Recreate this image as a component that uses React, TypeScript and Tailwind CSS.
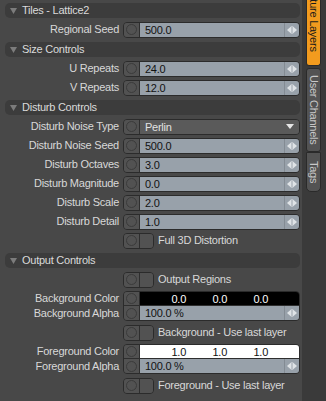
import React from 'react';

const font = "font-['Liberation_Sans',Arial,sans-serif] text-[11px] tracking-[-0.25px]";

const Arrows = () => (
  <svg width="10" height="8" viewBox="0 0 10 8">
    <path d="M0 4 L4 0.5 V7.5 Z" fill="#dfe3e6" />
    <rect x="4.5" y="0" width="1" height="8" fill="#dfe3e6" />
    <path d="M10 4 L6 0.5 V7.5 Z" fill="#dfe3e6" />
  </svg>
);

const Cap = ({ extra = '' }: { extra?: string }) => (
  <div className={`w-[16px] shrink-0 h-full flex items-center justify-center bg-[#525252] border-r border-[#2e2e2e] ${extra}`}>
    <div className="w-[11px] h-[11px] rounded-full border border-[#3b3b3b]" />
  </div>
);

const Label = ({ text }: { text: string }) => (
  <div className="w-[119px] shrink-0 text-right text-[#d8d8d8] whitespace-nowrap leading-[15px]">{text}</div>
);

const Header = ({ title }: { title: string }) => (
  <div className="h-[20px] pt-[3px] pl-[5px]">
    <div className="w-[295px] h-[15px] rounded-[5px] bg-[#3c3c3c] flex items-center">
      <svg className="ml-[5px]" width="7" height="6" viewBox="0 0 7 6">
        <path d="M0 0 H7 L3.5 6 Z" fill="#7c7c7c" />
      </svg>
      <span className="ml-[5px] text-[#dadada] leading-[15px]">{title}</span>
    </div>
  </div>
);

const NumRow = ({ label, value }: { label: string; value: string }) => (
  <div className="flex h-[19px] items-center">
    <Label text={label} />
    <div className="ml-[4px] w-[177px] h-[16px] flex rounded-[4px] border border-[#2b2b2b] overflow-hidden">
      <Cap />
      <div className="flex-1 bg-[#98a1aa] text-[#121212] pl-[5px] leading-[14px]">{value}</div>
      <div className="w-[15px] bg-[#98a1aa] border-l border-[#838b93] flex items-center justify-center">
        <Arrows />
      </div>
    </div>
  </div>
);

const SelectRow = ({ label, value }: { label: string; value: string }) => (
  <div className="flex h-[19px] items-center">
    <Label text={label} />
    <div className="ml-[4px] w-[177px] h-[16px] flex rounded-[4px] border border-[#2b2b2b] overflow-hidden">
      <Cap />
      <div className="flex-1 bg-[#5a5a5a] text-[#e2e2e2] pl-[5px] leading-[14px] flex items-center justify-between">
        <span>{value}</span>
        <svg className="mr-[5px]" width="8" height="5" viewBox="0 0 8 5">
          <path d="M0 0 H8 L4 5 Z" fill="#e6e6e6" />
        </svg>
      </div>
    </div>
  </div>
);

const ToggleRow = ({ label }: { label: string }) => (
  <div className="flex h-[19px] items-center">
    <div className="w-[119px] shrink-0" />
    <div className="ml-[4px] w-[31px] h-[16px] flex rounded-[4px] border border-[#2b2b2b] overflow-hidden">
      <Cap />
      <div className="flex-1 bg-[#525252]" />
    </div>
    <span className="ml-[4px] text-[#d8d8d8] whitespace-nowrap leading-[15px]">{label}</span>
  </div>
);

const ColorPair = ({
  name,
  values,
  dark,
}: {
  name: string;
  values: string[];
  dark: boolean;
}) => (
  <div className="flex pt-[2px] pb-[2px]">
    <div className="flex flex-col">
      <div className="h-[15px] flex items-center"><Label text={`${name} Color`} /></div>
      <div className="h-[15px] flex items-center"><Label text={`${name} Alpha`} /></div>
    </div>
    <div className="ml-[4px] w-[177px] h-[30px] flex flex-col rounded-[4px] border border-[#2b2b2b] overflow-hidden">
      <div className="h-[14px] flex border-b border-[#2e2e2e]">
        <Cap />
        <div className={`flex-1 flex pl-[5px] leading-[14px] ${dark ? 'bg-black text-white' : 'bg-white text-[#111]'}`}>
          {values.map((v, i) => (
            <span key={i} className="w-[41px] text-right">{v}</span>
          ))}
        </div>
      </div>
      <div className="flex-1 flex">
        <Cap />
        <div className="flex-1 bg-[#98a1aa] text-[#121212] pl-[5px] leading-[14px]">100.0 %</div>
        <div className="w-[15px] bg-[#98a1aa] border-l border-[#838b93] flex items-center justify-center">
          <Arrows />
        </div>
      </div>
    </div>
  </div>
);

const Tabs = () => (
  <div className="w-[24px] h-full bg-[#3a3a3a] pl-[4px] flex flex-col">
    <div className="w-[15px] h-[66px] bg-[#f29b1e] border-x border-b border-[#2a2a2a] rounded-b-[3px] overflow-hidden flex justify-center">
      <span className="[writing-mode:vertical-rl] mt-[-17px] text-[#1a1a1a] whitespace-nowrap leading-[13px]">Texture Layers</span>
    </div>
    <div className="mt-[2px] w-[15px] h-[84px] bg-[#535353] border border-[#2a2a2a] rounded-[3px] flex items-center justify-center">
      <span className="[writing-mode:vertical-rl] text-[#c8c8c8] whitespace-nowrap leading-[13px]">User Channels</span>
    </div>
    <div className="w-[15px] h-[40px] bg-[#535353] border border-[#2a2a2a] rounded-b-[5px] flex items-center justify-center">
      <span className="[writing-mode:vertical-rl] text-[#c8c8c8] whitespace-nowrap leading-[13px]">Tags</span>
    </div>
  </div>
);

export default function App() {
  return (
    <div className={`w-[326px] h-[401px] bg-[#484848] flex overflow-hidden ${font}`}>
      <div className="w-[302px] flex flex-col">
        <Header title="Tiles - Lattice2" />
        <NumRow label="Regional Seed" value="500.0" />
        <Header title="Size Controls" />
        <NumRow label="U Repeats" value="24.0" />
        <NumRow label="V Repeats" value="12.0" />
        <Header title="Disturb Controls" />
        <SelectRow label="Disturb Noise Type" value="Perlin" />
        <NumRow label="Disturb Noise Seed" value="500.0" />
        <NumRow label="Disturb Octaves" value="3.0" />
        <NumRow label="Disturb Magnitude" value="0.0" />
        <NumRow label="Disturb Scale" value="2.0" />
        <NumRow label="Disturb Detail" value="1.0" />
        <ToggleRow label="Full 3D Distortion" />
        <Header title="Output Controls" />
        <ToggleRow label="Output Regions" />
        <ColorPair name="Background" values={['0.0', '0.0', '0.0']} dark />
        <ToggleRow label="Background - Use last layer" />
        <ColorPair name="Foreground" values={['1.0', '1.0', '1.0']} dark={false} />
        <ToggleRow label="Foreground - Use last layer" />
      </div>
      <Tabs />
    </div>
  );
}
